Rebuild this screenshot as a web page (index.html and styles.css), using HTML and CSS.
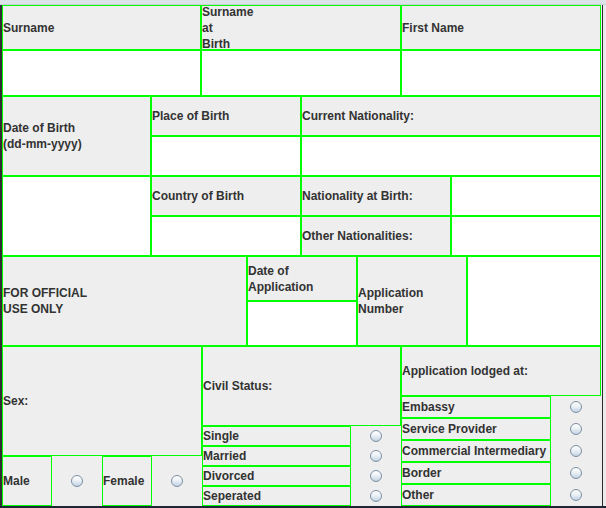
FILE: index.html
```html
<!DOCTYPE html>
<html lang="en">
<head>
<meta charset="utf-8">
<title>Application Form</title>
<link rel="stylesheet" href="styles.css">
</head>
<body>
<div class="screen">
  <div class="topbar"></div>
  <div class="middle">
    <div class="lstrip"></div>
    <div class="form">
      <div class="sec sec-a">
        <div class="col w199">
          <div class="cell lbl h45">Surname</div>
          <div class="cell fld h46"></div>
        </div>
        <div class="col w200">
          <div class="cell lbl h45">Surname<br>at<br>Birth</div>
          <div class="cell fld h46"></div>
        </div>
        <div class="col w200">
          <div class="cell lbl h45">First Name</div>
          <div class="cell fld h46"></div>
        </div>
      </div>

      <div class="sec sec-b">
        <div class="col w149">
          <div class="cell lbl h80">Date of Birth<br>(dd-mm-yyyy)</div>
          <div class="cell fld h80"></div>
        </div>
        <div class="col w150">
          <div class="cell lbl h40">Place of Birth</div>
          <div class="cell fld h40"></div>
          <div class="cell lbl h40">Country of Birth</div>
          <div class="cell fld h40"></div>
        </div>
        <div class="col w300">
          <div class="cell lbl h40">Current Nationality:</div>
          <div class="cell fld h40"></div>
          <div class="row h40">
            <div class="cell lbl w150">Nationality at Birth:</div>
            <div class="cell fld w150"></div>
          </div>
          <div class="row h40">
            <div class="cell lbl w150">Other Nationalities:</div>
            <div class="cell fld w150"></div>
          </div>
        </div>
      </div>

      <div class="sec sec-c">
        <div class="cell lbl w245">FOR OFFICIAL<br>USE ONLY</div>
        <div class="col w110">
          <div class="cell lbl h45">Date of<br>Application</div>
          <div class="cell fld h45"></div>
        </div>
        <div class="cell lbl w110">Application<br>Number</div>
        <div class="cell fld w134"></div>
      </div>

      <div class="sec sec-d">
        <div class="col w200">
          <div class="cell lbl h110">Sex:</div>
          <div class="row h50">
            <div class="cell lbl w50">Male</div>
            <div class="rcell w50"><span class="radio"></span></div>
            <div class="cell lbl w50">Female</div>
            <div class="rcell w50"><span class="radio"></span></div>
          </div>
        </div>
        <div class="col w199">
          <div class="cell lbl h80">Civil Status:</div>
          <div class="row h20">
            <div class="cell lbl w149">Single</div>
            <div class="rcell w50"><span class="radio"></span></div>
          </div>
          <div class="row h20">
            <div class="cell lbl w149">Married</div>
            <div class="rcell w50"><span class="radio"></span></div>
          </div>
          <div class="row h20">
            <div class="cell lbl w149">Divorced</div>
            <div class="rcell w50"><span class="radio"></span></div>
          </div>
          <div class="row h20">
            <div class="cell lbl w149">Seperated</div>
            <div class="rcell w50"><span class="radio"></span></div>
          </div>
        </div>
        <div class="col w200">
          <div class="cell lbl h50">Application lodged at:</div>
          <div class="row h22">
            <div class="cell lbl w150">Embassy</div>
            <div class="rcell w50"><span class="radio"></span></div>
          </div>
          <div class="row h22">
            <div class="cell lbl w150">Service Provider</div>
            <div class="rcell w50"><span class="radio"></span></div>
          </div>
          <div class="row h22">
            <div class="cell lbl w150">Commercial Intermediary</div>
            <div class="rcell w50"><span class="radio"></span></div>
          </div>
          <div class="row h22">
            <div class="cell lbl w150">Border</div>
            <div class="rcell w50"><span class="radio"></span></div>
          </div>
          <div class="row h22">
            <div class="cell lbl w150">Other</div>
            <div class="rcell w50"><span class="radio"></span></div>
          </div>
        </div>
      </div>
    </div>
    <div class="rstrip">
      <div class="rgap"></div>
      <div class="rline"></div>
      <div class="rrest"></div>
    </div>
  </div>
  <div class="bottombar"></div>
</div>
</body>
</html>
```

FILE: styles.css
```css
* { box-sizing: border-box; }

html, body {
  margin: 0;
  padding: 0;
  background: #eeeeee;
}

body {
  font-family: "Liberation Sans", Arial, sans-serif;
  font-weight: bold;
  font-size: 12px;
  line-height: 16px;
  color: #333333;
}

.screen {
  width: 606px;
  height: 508px;
  display: flex;
  flex-direction: column;
  overflow: hidden;
}

.topbar {
  height: 5px;
  flex: none;
  background: #dde2e8;
  border-bottom: 1px solid #c9d0d8;
}

.middle {
  height: 501px;
  flex: none;
  display: flex;
}

.lstrip {
  width: 2px;
  flex: none;
  background: #2e2e2e;
}

.form {
  width: 599px;
  flex: none;
  display: flex;
  flex-direction: column;
}

.rstrip {
  flex: 1;
  display: flex;
}

.rgap { width: 1px; background: #eeeeee; }
.rline { width: 1px; background: #2b2b2b; }
.rrest { flex: 1; background: #ebebeb; }

.bottombar {
  flex: 1;
  background: #1e2736;
}

.sec { display: flex; flex: none; }
.sec-a { height: 91px; }
.sec-b { height: 160px; }
.sec-c { height: 90px; }
.sec-d { height: 160px; }

.col { display: flex; flex-direction: column; flex: none; }
.row { display: flex; flex: none; }

.cell {
  flex: none;
  border: 1px solid #00ff00;
}

.lbl {
  background: #eeeeee;
  display: flex;
  align-items: center;
  white-space: nowrap;
  padding: 0;
}

.fld { background: #ffffff; }

.rcell {
  flex: none;
  display: flex;
  align-items: center;
  justify-content: center;
  background: #eeeeee;
}

.radio {
  display: block;
  width: 12px;
  height: 12px;
  border-radius: 50%;
  border: 1px solid #7d8fa3;
  background: linear-gradient(to bottom, #ffffff 0%, #eef3f8 40%, #c3d3e4 100%);
}

.w50 { width: 50px; }
.w110 { width: 110px; }
.w134 { width: 134px; }
.w149 { width: 149px; }
.w150 { width: 150px; }
.w199 { width: 199px; }
.w200 { width: 200px; }
.w245 { width: 245px; }
.w300 { width: 300px; }

.h20 { height: 20px; }
.h22 { height: 22px; }
.h40 { height: 40px; }
.h45 { height: 45px; }
.h46 { height: 46px; }
.h50 { height: 50px; }
.h80 { height: 80px; }
.h110 { height: 110px; }
```
